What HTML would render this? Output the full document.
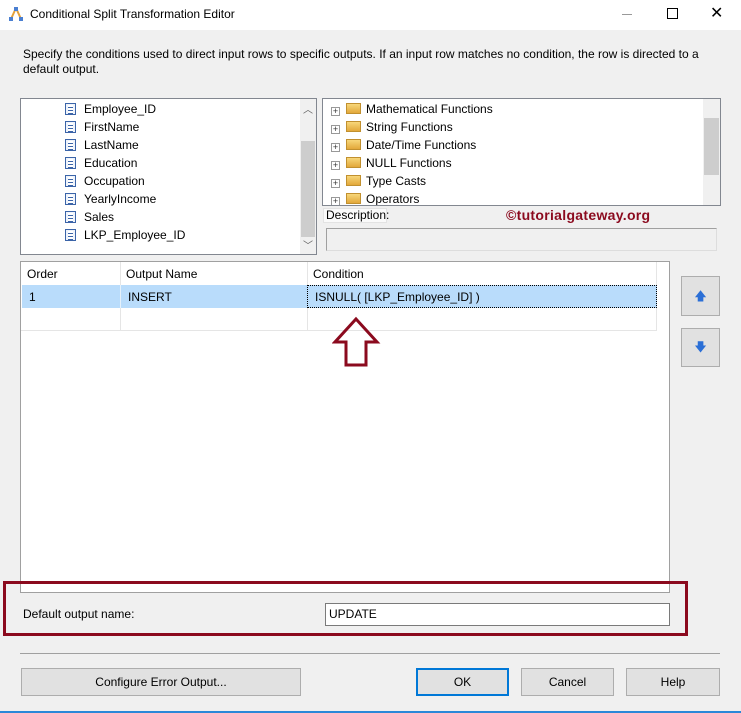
<!DOCTYPE html>
<html><head><style>
*{box-sizing:border-box;margin:0;padding:0}
body{width:741px;height:713px;background:#f0f0f0;font-family:"Liberation Sans",sans-serif;font-size:12px;color:#000;position:relative;overflow:hidden}
.a{position:absolute}
.title{left:0;top:0;width:741px;height:30px;background:#fff}
.box{background:#fff;border:1px solid #828790}
.it{position:absolute;height:18px;line-height:18px;white-space:nowrap}
.ic{display:inline-block;width:11px;height:12px;border:1px solid #3b64a8;background:#eef3fb;vertical-align:-2px;margin-right:8px;background-image:repeating-linear-gradient(#fff 0 2px,#3b64a8 2px 3px);background-size:5px 9px;background-position:2px 1px;background-repeat:no-repeat}
.pl{display:inline-block;width:9px;height:9px;border:1px solid #999;vertical-align:-1px;margin-right:6px;font-size:9px;line-height:7px;text-align:center;color:#333}
.fd{display:inline-block;width:15px;height:11px;background:linear-gradient(#f7d77a,#e2a83a);border:1px solid #c1902f;vertical-align:-1px;margin-right:5px}
.btn{position:absolute;background:#e1e1e1;border:1px solid #adadad;text-align:center;line-height:26px}
</style></head><body>
<div class="a title"></div>
<svg class="a" style="left:8px;top:6px" width="16" height="16"><path d="M8 2 L3 13 M8 2 L13 13" stroke="#e3a13b" stroke-width="2"/><rect x="6" y="1" width="4" height="4" fill="#4a7fd1"/><rect x="1" y="11" width="4" height="4" fill="#4a7fd1"/><rect x="11" y="11" width="4" height="4" fill="#4a7fd1"/></svg>
<div class="a" style="left:30px;top:7px;font-size:12px">Conditional Split Transformation Editor</div>
<div class="a" style="left:622px;top:14px;width:10px;height:1px;background:#999"></div>
<div class="a" style="left:667px;top:8px;width:11px;height:11px;border:1px solid #000"></div>
<div class="a" style="left:710px;top:3px;font-size:16px">✕</div>
<div class="a" style="left:23px;top:47px;line-height:15px;width:700px">Specify the conditions used to direct input rows to specific outputs. If an input row matches no condition, the row is directed to a default output.</div>

<div class="a box" style="left:20px;top:98px;width:297px;height:157px">
 <div class="it" style="left:44px;top:1px"><span class="ic"></span>Employee_ID</div>
 <div class="it" style="left:44px;top:19px"><span class="ic"></span>FirstName</div>
 <div class="it" style="left:44px;top:37px"><span class="ic"></span>LastName</div>
 <div class="it" style="left:44px;top:55px"><span class="ic"></span>Education</div>
 <div class="it" style="left:44px;top:73px"><span class="ic"></span>Occupation</div>
 <div class="it" style="left:44px;top:91px"><span class="ic"></span>YearlyIncome</div>
 <div class="it" style="left:44px;top:109px"><span class="ic"></span>Sales</div>
 <div class="it" style="left:44px;top:127px"><span class="ic"></span>LKP_Employee_ID</div>
 <div class="a" style="left:279px;top:0;width:16px;height:155px;background:#f0f0f0"></div>
 <div class="a" style="left:280px;top:42px;width:14px;height:96px;background:#cdcdcd"></div>
 <div class="a" style="left:282px;top:2px;font-size:10px;color:#606060">︿</div>
 <div class="a" style="left:282px;top:138px;font-size:10px;color:#606060">﹀</div>
</div>

<div class="a box" style="left:322px;top:98px;width:399px;height:108px;overflow:hidden">
 <div class="it" style="left:8px;top:1px"><span class="pl">+</span><span class="fd"></span>Mathematical Functions</div>
 <div class="it" style="left:8px;top:19px"><span class="pl">+</span><span class="fd"></span>String Functions</div>
 <div class="it" style="left:8px;top:37px"><span class="pl">+</span><span class="fd"></span>Date/Time Functions</div>
 <div class="it" style="left:8px;top:55px"><span class="pl">+</span><span class="fd"></span>NULL Functions</div>
 <div class="it" style="left:8px;top:73px"><span class="pl">+</span><span class="fd"></span>Type Casts</div>
 <div class="it" style="left:8px;top:91px"><span class="pl">+</span><span class="fd"></span>Operators</div>
 <div class="a" style="left:380px;top:0;width:17px;height:106px;background:#f0f0f0"></div>
 <div class="a" style="left:381px;top:19px;width:15px;height:57px;background:#cdcdcd"></div>
</div>
<div class="a" style="left:323px;top:208px;width:64px;height:15px;background:#fafafa;border:1px solid #e3e3e3;line-height:13px;padding-left:2px">Description:</div>
<div class="a" style="left:506px;top:207px;font-size:14px;font-weight:bold;color:#8b0a1e;letter-spacing:0.3px">©tutorialgateway.org</div>
<div class="a" style="left:326px;top:228px;width:391px;height:23px;background:#f0f0f0;border:1px solid #a0a0a0;border-right-color:#ddd;border-bottom-color:#ddd"></div>

<div class="a box" style="left:20px;top:261px;width:650px;height:332px;border-color:#a0a0a0">
 <div class="a" style="left:0;top:0;width:636px;height:69px;border-right:1px solid #e5e5e5"></div>
 <div class="a" style="left:6px;top:5px">Order</div>
 <div class="a" style="left:105px;top:5px">Output Name</div>
 <div class="a" style="left:292px;top:5px">Condition</div>
 <div class="a" style="left:99px;top:0;width:1px;height:69px;background:#e5e5e5"></div>
 <div class="a" style="left:286px;top:0;width:1px;height:69px;background:#e5e5e5"></div>
 <div class="a" style="left:1px;top:23px;width:635px;height:23px;background:#b9dcfb"></div>
 <div class="a" style="left:99px;top:23px;width:1px;height:23px;background:#e5f1fb"></div>
 <div class="a" style="left:286px;top:23px;width:350px;height:23px;border:1px dotted #000"></div>
 <div class="a" style="left:8px;top:28px">1</div>
 <div class="a" style="left:107px;top:28px">INSERT</div>
 <div class="a" style="left:294px;top:28px">ISNULL( [LKP_Employee_ID] )</div>
 <div class="a" style="left:0;top:68px;width:636px;height:1px;background:#e5e5e5"></div>
</div>
<svg class="a" style="left:332px;top:316px" width="50" height="52"><path d="M24 3 L45 26 L34 26 L34 49 L14 49 L14 26 L3 26 Z" fill="none" stroke="#8b0a1e" stroke-width="3"/></svg>

<div class="btn" style="left:681px;top:276px;width:39px;height:40px;color:#2b6fd6;line-height:38px">🡅</div>
<div class="btn" style="left:681px;top:328px;width:39px;height:39px;color:#2b6fd6;line-height:37px">🡇</div>

<div class="a" style="left:3px;top:581px;width:685px;height:55px;border:3px solid #8b0a1e"></div>
<div class="a" style="left:23px;top:607px">Default output name:</div>
<div class="a" style="left:325px;top:603px;width:345px;height:23px;background:#fff;border:1px solid #7a7a7a;padding:3px 3px;line-height:15px">UPDATE</div>
<div class="a" style="left:20px;top:653px;width:700px;height:1px;background:#a0a0a0"></div>
<div class="btn" style="left:21px;top:668px;width:280px;height:28px">Configure Error Output...</div>
<div class="btn" style="left:416px;top:668px;width:93px;height:28px;border:2px solid #0078d7;line-height:24px">OK</div>
<div class="btn" style="left:521px;top:668px;width:93px;height:28px">Cancel</div>
<div class="btn" style="left:626px;top:668px;width:94px;height:28px">Help</div>
<div class="a" style="left:0;top:711px;width:741px;height:2px;background:#2b88d8"></div>
</body></html>
